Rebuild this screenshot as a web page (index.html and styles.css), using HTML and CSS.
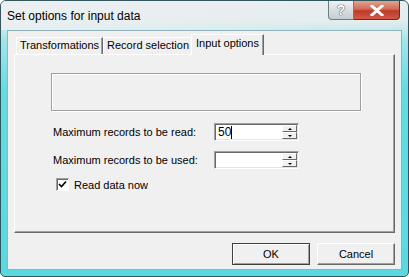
FILE: index.html
```html
<!DOCTYPE html>
<html>
<head>
    <title>Set options for input data</title>
    <link rel="stylesheet" href="styles.css">
</head>
<body>
    <div class="window">
        <div class="titlebar">
            <div class="title">Set options for input data</div>
            <div class="caption-buttons">
                <div class="cap-btn help">?</div>
                <div class="cap-btn close">
                    <svg width="14" height="11" viewBox="0 0 14 11">
                        <path d="M2 1 L12 10 M12 1 L2 10" stroke="#fff" stroke-width="3" stroke-linecap="square" fill="none"/>
                    </svg>
                </div>
            </div>
        </div>
        <div class="client">
            <div class="tabs">
                <div class="tab">Transformations</div>
                <div class="tab">Record selection</div>
                <div class="tab active">Input options</div>
            </div>
            <div class="panel">
                <div class="groupbox"></div>
                <div class="field-row">
                    <label class="field-label">Maximum records to be read:</label>
                    <div class="spin">
                        <div class="spin-text">50<span class="caret"></span></div>
                        <div class="spin-buttons">
                            <div class="spin-btn"><span class="arrow up"></span></div>
                            <div class="spin-btn"><span class="arrow down"></span></div>
                        </div>
                    </div>
                </div>
                <div class="field-row">
                    <label class="field-label">Maximum records to be used:</label>
                    <div class="spin">
                        <div class="spin-text"></div>
                        <div class="spin-buttons">
                            <div class="spin-btn"><span class="arrow up"></span></div>
                            <div class="spin-btn"><span class="arrow down"></span></div>
                        </div>
                    </div>
                </div>
                <div class="check-row">
                    <div class="checkbox">
                        <svg width="9" height="9" viewBox="0 0 9 9">
                            <path d="M1 4 L3.5 6.5 L8 1.5" stroke="#000" stroke-width="1.6" fill="none"/>
                        </svg>
                    </div>
                    <span>Read data now</span>
                </div>
            </div>
            <div class="actions">
                <button class="btn default">OK</button>
                <button class="btn">Cancel</button>
            </div>
        </div>
    </div>
</body>
</html>
```

FILE: styles.css
```css
body {
    margin: 0;
    font-family: "Liberation Sans", Arial, sans-serif;
    font-size: 11px;
    color: #000;
    background: #fff;
}
.window {
    width: 409px;
    height: 277px;
    box-sizing: border-box;
    border: 1px solid #33565c;
    border-radius: 6px 6px 5px 5px;
    background: linear-gradient(180deg, #e8eef0 0, #e4ecee 20px, #9fe6ea 40px, #63dce3 90px, #5ad8e0 100%);
    display: flex;
    flex-direction: column;
    overflow: hidden;
}
.titlebar {
    height: 29px;
    display: flex;
    align-items: flex-start;
    background: linear-gradient(90deg, rgba(235, 240, 242, 0.9) 0, rgba(235, 240, 242, 0.6) 40%, rgba(235, 240, 242, 0) 100%);
}
.title {
    padding: 8px 0 0 6px;
    font-size: 12px;
    color: #000;
}
.caption-buttons {
    margin-left: auto;
    margin-right: 8px;
    display: flex;
}
.cap-btn {
    height: 19px;
    box-sizing: border-box;
    border: 1px solid #6d7d84;
    border-top: none;
    display: flex;
    align-items: center;
    justify-content: center;
}
.help {
    width: 26px;
    border-radius: 0 0 0 4px;
    background: linear-gradient(180deg, #eef2f4 0, #d6dee2 50%, #c4ced4 100%);
    color: #fff;
    font-size: 14px;
    font-weight: bold;
    text-shadow: 0 0 1px #333, 0 0 1px #333;
}
.close {
    width: 46px;
    border-left: none;
    border-color: #6a2a24;
    border-radius: 0 0 4px 0;
    background: linear-gradient(180deg, #e0a593 0, #d26a55 45%, #c0392b 55%, #d05a44 100%);
}
.client {
    flex: 1;
    margin: 0 6px 6px;
    background: #f0f0f0;
    border: 1px solid #8fb4bc;
    padding: 3px 6px 0 6px;
    display: flex;
    flex-direction: column;
}
.tabs {
    display: flex;
    align-items: flex-end;
    height: 20px;
    padding-left: 2px;
    position: relative;
    z-index: 1;
}
.tab {
    height: 17px;
    line-height: 15px;
    padding: 0 3px;
    box-sizing: border-box;
    border-top: 1px solid #fff;
    border-left: 1px solid #fff;
    border-right: 1px solid #696969;
    box-shadow: inset -1px 0 0 #a0a0a0;
    white-space: nowrap;
}
.tab.active {
    height: 21px;
    margin: 0 0 -1px -2px;
    padding: 0 4px 0 4px;
    line-height: 16px;
    background: #f0f0f0;
}
.panel {
    height: 179px;
    box-sizing: border-box;
    border-top: 1px solid #fff;
    border-left: 1px solid #fff;
    border-right: 1px solid #696969;
    border-bottom: 1px solid #696969;
    box-shadow: inset -1px -1px 0 #a0a0a0;
    padding: 18px 0 0 36px;
}
.groupbox {
    width: 310px;
    height: 38px;
    box-sizing: border-box;
    border: 1px solid #a0a0a0;
    box-shadow: 1px 1px 0 #fff, inset 1px 1px 0 #fff;
    margin-bottom: 12px;
}
.field-row {
    display: flex;
    align-items: center;
    height: 18px;
    margin-bottom: 10px;
    padding-left: 2px;
}
.field-label {
    width: 161px;
}
.spin {
    width: 85px;
    height: 18px;
    box-sizing: border-box;
    border-top: 1px solid #a0a0a0;
    border-left: 1px solid #a0a0a0;
    border-right: 1px solid #fff;
    border-bottom: 1px solid #fff;
    box-shadow: inset 1px 1px 0 #696969, inset -1px -1px 0 #e3e3e3;
    background: #fff;
    display: flex;
}
.spin-text {
    flex: 1;
    padding: 2px 0 0 3px;
    font-size: 12px;
    line-height: 13px;
    display: flex;
    align-items: flex-start;
}
.caret {
    display: inline-block;
    width: 1px;
    height: 13px;
    background: #000;
}
.spin-buttons {
    width: 15px;
    padding: 1px 1px 1px 0;
    display: flex;
    flex-direction: column;
}
.spin-btn {
    flex: 1;
    background: #f0f0f0;
    border-top: 1px solid #fff;
    border-left: 1px solid #fff;
    border-bottom: 1px solid #696969;
    border-right: 1px solid #696969;
    display: flex;
    align-items: center;
    justify-content: center;
}
.arrow {
    width: 0;
    height: 0;
    border-left: 2px solid transparent;
    border-right: 2px solid transparent;
}
.arrow.up {
    border-bottom: 2px solid #000;
}
.arrow.down {
    border-top: 2px solid #000;
}
.check-row {
    display: flex;
    align-items: center;
    padding-left: 5px;
    margin-top: -1px;
}
.checkbox {
    width: 13px;
    height: 13px;
    box-sizing: border-box;
    border-top: 1px solid #a0a0a0;
    border-left: 1px solid #a0a0a0;
    border-right: 1px solid #fff;
    border-bottom: 1px solid #fff;
    box-shadow: inset 1px 1px 0 #696969;
    background: #fff;
    display: flex;
    align-items: center;
    justify-content: center;
    margin-right: 5px;
}
.actions {
    display: flex;
    justify-content: flex-end;
    gap: 7px;
    margin-top: 10px;
}
.btn {
    width: 78px;
    height: 22px;
    font-family: "Liberation Sans", Arial, sans-serif;
    font-size: 11px;
    background: #f0f0f0;
    border-top: 1px solid #fff;
    border-left: 1px solid #fff;
    border-right: 1px solid #696969;
    border-bottom: 1px solid #696969;
    box-shadow: inset -1px -1px 0 #a0a0a0;
    padding: 0;
}
.btn.default {
    border: 1px solid #404040;
    box-shadow: inset 1px 1px 0 #fff, inset -1px -1px 0 #a0a0a0;
}
```
